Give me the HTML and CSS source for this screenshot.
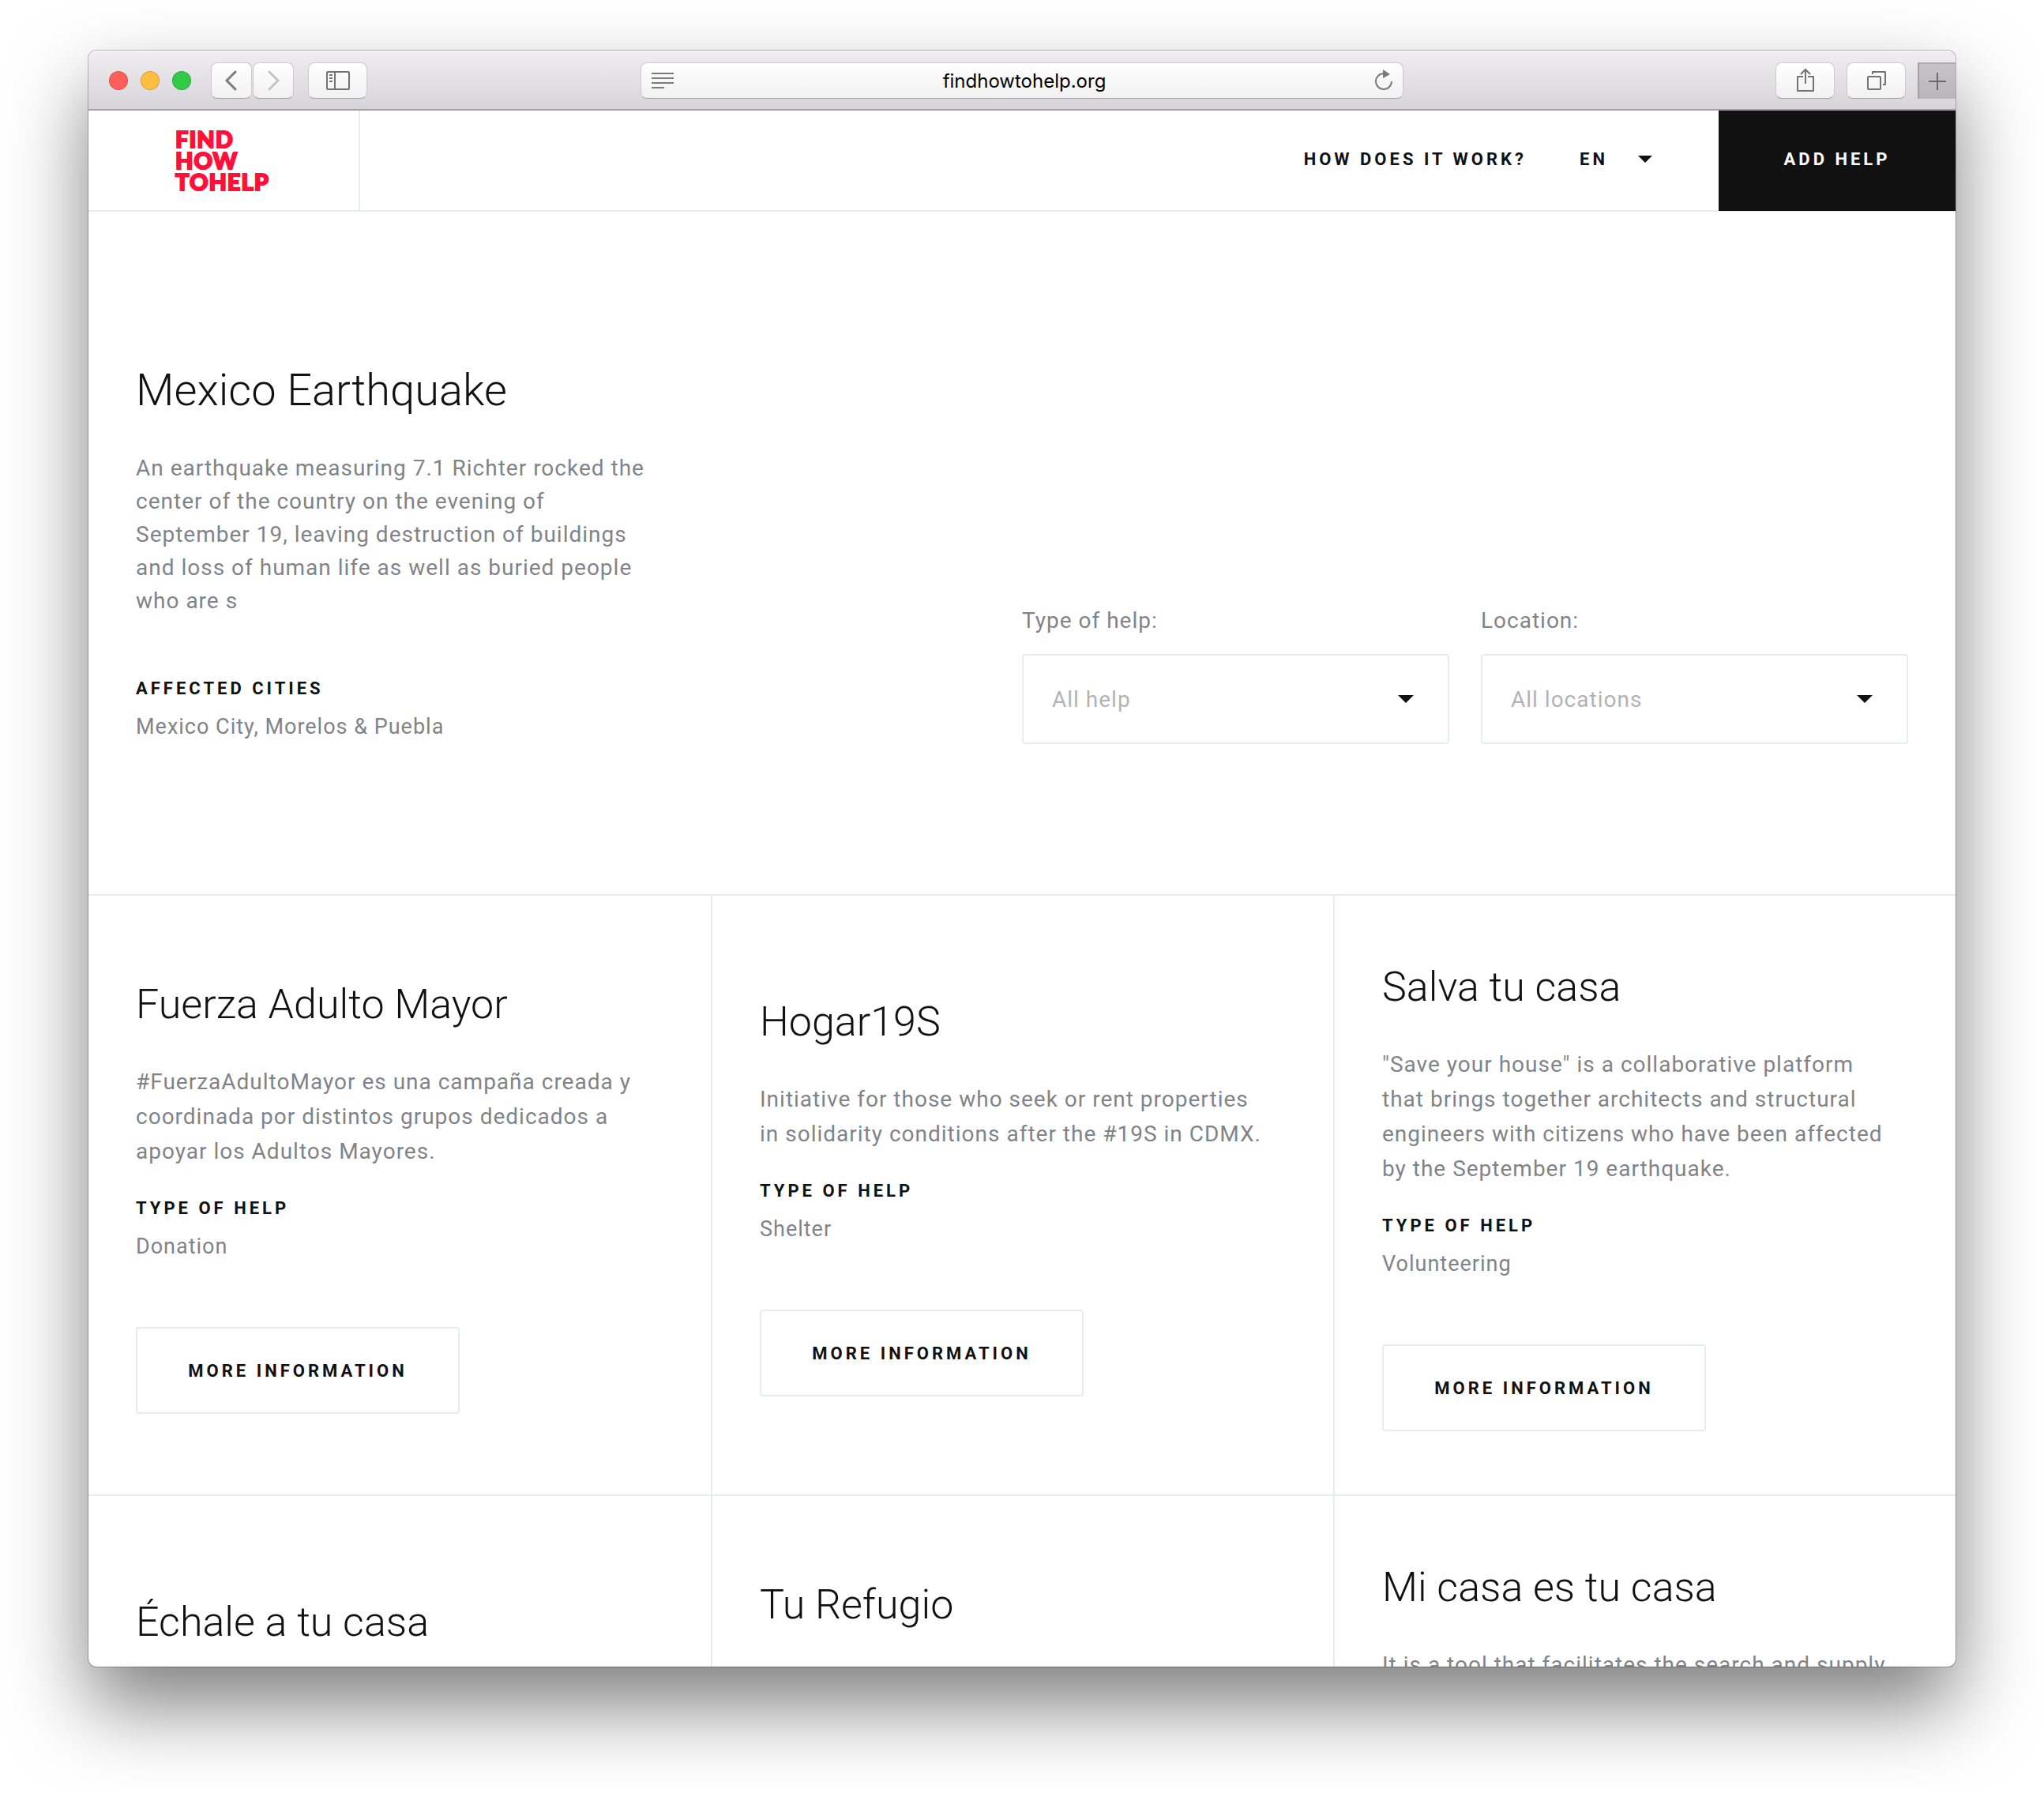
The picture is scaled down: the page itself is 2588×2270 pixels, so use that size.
FILE: index.html
```
<!DOCTYPE html>
<html lang="en">

<head>
    <meta charset="UTF-8" />
    <meta name="viewport" content="width=device-width, initial-scale=1.0" />
    <title>Find How To Help</title>
    <link rel="stylesheet" href="styles.css">
</head>

<body>
    <div class="window">
        <div class="toolbar">
            <div class="toolbar-left">
                <div class="lights">
                    <span class="light red"></span>
                    <span class="light yellow"></span>
                    <span class="light green"></span>
                </div>
                <div class="history">
                    <button class="tool-btn nav-btn" aria-label="Back">
                        <svg width="16" height="26" viewBox="0 0 16 26"><path d="M13 2 2 13l11 11" fill="none" stroke="#7b7b7b" stroke-width="3" stroke-linecap="round" /></svg>
                    </button>
                    <button class="tool-btn nav-btn" aria-label="Forward">
                        <svg width="16" height="26" viewBox="0 0 16 26"><path d="M3 2l11 11L3 24" fill="none" stroke="#c4c4c4" stroke-width="3" stroke-linecap="round" /></svg>
                    </button>
                </div>
                <button class="tool-btn" aria-label="Sidebar">
                    <svg width="30" height="24" viewBox="0 0 30 24" fill="none" stroke="#737373" stroke-width="2">
                        <rect x="1" y="1" width="28" height="22" rx="1" />
                        <path d="M11 1v22M4 5h4M4 9h4M4 13h4" />
                    </svg>
                </button>
            </div>
            <div class="address">
                <svg width="28" height="20" viewBox="0 0 28 20"><path d="M0 1h28M0 7h28M0 13h28M0 19h16" stroke="#7b7b7b" stroke-width="2" /></svg>
                <span class="url">findhowtohelp.org</span>
                <button class="reload" aria-label="Reload">
                    <svg width="22" height="28" viewBox="0 0 22 28">
                        <path d="M11 5a10 10 0 1 0 10 10" fill="none" stroke="#7b7b7b" stroke-width="2" />
                        <path d="M10 0v11l9-5z" fill="#7b7b7b" />
                    </svg>
                </button>
            </div>
            <div class="toolbar-right">
                <button class="tool-btn" aria-label="Share">
                    <svg width="22" height="32" viewBox="0 0 22 32" fill="none" stroke="#737373" stroke-width="2" stroke-linejoin="round">
                        <path d="M8 11H1v18h20V11h-7M11 20V1M5 8l6-6 6 6" />
                    </svg>
                </button>
                <button class="tool-btn" aria-label="Tabs">
                    <svg width="24" height="24" viewBox="0 0 24 24" fill="none" stroke="#737373" stroke-width="2" stroke-linejoin="round">
                        <rect x="1" y="7" width="16" height="16" rx="1" />
                        <path d="M7 4V1h16v16h-3" />
                    </svg>
                </button>
                <button class="new-tab" aria-label="New tab">
                    <svg width="22" height="22" viewBox="0 0 22 22"><path d="M11 0v22M0 11h22" stroke="#6c6a6e" stroke-width="2" /></svg>
                </button>
            </div>
        </div>

        <div class="page">
            <header class="header">
                <a class="logo" href="#">FIND<br>HOW<br>TOHELP</a>
                <nav class="nav">
                    <a class="nav-link" href="#">How does it work?</a>
                    <div class="lang">
                        <select class="lang-select" aria-label="Language">
                            <option>EN</option>
                            <option>ES</option>
                        </select>
                        <svg class="caret" width="18" height="9" viewBox="0 0 20 10"><path d="M0 0h20L10 10z" fill="#111" /></svg>
                    </div>
                    <a class="add-help" href="#">Add help</a>
                </nav>
            </header>

            <section class="hero">
                <div class="intro">
                    <h1>Mexico Earthquake</h1>
                    <p class="lead">An earthquake measuring 7.1 Richter rocked the center of the country on the evening of September 19, leaving destruction of buildings and loss of human life as well as buried people who are s</p>
                    <h3>Affected cities</h3>
                    <p class="value">Mexico City, Morelos &amp; Puebla</p>
                </div>
                <form class="filters">
                    <div class="field">
                        <label for="help">Type of help:</label>
                        <div class="select-box">
                            <select id="help">
                                <option>All help</option>
                            </select>
                            <svg class="caret" width="20" height="10" viewBox="0 0 20 10"><path d="M0 0h20L10 10z" fill="#111" /></svg>
                        </div>
                    </div>
                    <div class="field">
                        <label for="location">Location:</label>
                        <div class="select-box">
                            <select id="location">
                                <option>All locations</option>
                            </select>
                            <svg class="caret" width="20" height="10" viewBox="0 0 20 10"><path d="M0 0h20L10 10z" fill="#111" /></svg>
                        </div>
                    </div>
                </form>
            </section>

            <main class="cards">
                <article class="card">
                    <h2>Fuerza Adulto Mayor</h2>
                    <p class="text">#FuerzaAdultoMayor es una campaña creada y coordinada por distintos grupos dedicados a apoyar los Adultos Mayores.</p>
                    <h3>Type of help</h3>
                    <p class="value">Donation</p>
                    <a class="more" href="#">More information</a>
                </article>
                <article class="card">
                    <h2>Hogar19S</h2>
                    <p class="text">Initiative for those who seek or rent properties in solidarity conditions after the #19S in CDMX.</p>
                    <h3>Type of help</h3>
                    <p class="value">Shelter</p>
                    <a class="more" href="#">More information</a>
                </article>
                <article class="card">
                    <h2>Salva tu casa</h2>
                    <p class="text">"Save your house" is a collaborative platform that brings together architects and structural engineers with citizens who have been affected by the September 19 earthquake.</p>
                    <h3>Type of help</h3>
                    <p class="value">Volunteering</p>
                    <a class="more" href="#">More information</a>
                </article>
                <article class="card peek peek-low">
                    <h2>Échale a tu casa</h2>
                </article>
                <article class="card peek peek-mid">
                    <h2>Tu Refugio</h2>
                </article>
                <article class="card peek">
                    <h2>Mi casa es tu casa</h2>
                    <p class="text">It is a tool that facilitates the search and supply</p>
                </article>
            </main>
        </div>
    </div>
</body>

</html>
```
FILE: styles.css
```
* {
    margin: 0;
    padding: 0;
    box-sizing: border-box;
}

:root {
    --line: #e8ecef;
    --ink: #111;
    --gray: #808489;
}

body {
    background: #fff;
    color: var(--ink);
    font-family: Roboto, sans-serif;
    padding: 64px 112px 160px;
}

a {
    color: inherit;
    text-decoration: none;
}

button,
select {
    font: inherit;
    color: inherit;
    border: none;
    background: none;
    cursor: pointer;
}

select {
    appearance: none;
}

svg {
    display: block;
}

/* browser window */

.window {
    display: flex;
    flex-direction: column;
    height: calc(100vh - 224px);
    border-radius: 10px;
    overflow: hidden;
    background: #fff;
    box-shadow: 0 0 0 1px rgba(0, 0, 0, 0.25), 0 50px 100px rgba(0, 0, 0, 0.5);
}

.toolbar {
    display: grid;
    grid-template-columns: 1fr minmax(0, 966px) 1fr;
    align-items: center;
    flex: none;
    height: 76px;
    background: linear-gradient(#efedf0, #d6d4d8);
    border-top: 2px solid #f6f5f7;
    border-bottom: 2px solid #a3a0a6;
}

.toolbar-left {
    display: flex;
    align-items: center;
    padding-left: 26px;
}

.lights {
    display: flex;
    gap: 16px;
    margin-right: 25px;
}

.light {
    width: 24px;
    height: 24px;
    border-radius: 50%;
    border: 1px solid rgba(0, 0, 0, 0.15);
}

.red {
    background: #fd605c;
}

.yellow {
    background: #fdbe41;
}

.green {
    background: #33c949;
}

.history {
    display: flex;
    gap: 1px;
    margin-right: 18px;
}

.tool-btn {
    display: flex;
    align-items: center;
    justify-content: center;
    width: 75px;
    height: 46px;
    border-radius: 8px;
    background: linear-gradient(#fff, #f1f1f1);
    border: 1px solid #cccacd;
    border-bottom-color: #a5a3a7;
}

.nav-btn {
    width: 52px;
}

.address {
    display: flex;
    align-items: center;
    justify-content: space-between;
    height: 46px;
    padding: 0 13px;
    border-radius: 8px;
    background: linear-gradient(#fff, #f1f1f1);
    border: 1px solid #cccacd;
    border-bottom-color: #a5a3a7;
}

.url {
    font-family: Inter, sans-serif;
    font-size: 24px;
    color: #000;
}

.toolbar-right {
    display: flex;
    align-items: center;
    justify-content: flex-end;
    gap: 15px;
}

.new-tab {
    display: flex;
    align-items: center;
    justify-content: center;
    align-self: flex-end;
    width: 48px;
    height: 46px;
    background: linear-gradient(#c6c4c8, #b9b6ba);
    border-top: 2px solid #aeabb0;
    border-left: 2px solid #a3a0a6;
}

/* site */

.page {
    flex: 1;
    min-height: 0;
    overflow: hidden;
}

.header {
    display: flex;
    justify-content: space-between;
    height: 128px;
    border-bottom: 2px solid var(--line);
}

.logo {
    width: 344px;
    padding: 22px 0 0 110px;
    border-right: 2px solid var(--line);
    font-family: Lato, sans-serif;
    font-weight: 900;
    font-size: 29px;
    line-height: 27px;
    letter-spacing: 1px;
    -webkit-text-stroke: 2px #ff1038;
    color: #ff1038;
}

.nav {
    display: flex;
    align-items: center;
}

.nav,
.more,
h3 {
    font-size: 22px;
    font-weight: 700;
    letter-spacing: 4px;
    text-transform: uppercase;
}

.nav-link,
.lang {
    margin-bottom: 3px;
}

.nav-link {
    margin-right: 67px;
}

.lang {
    position: relative;
    width: 92px;
    margin-right: 84px;
}

.lang-select {
    width: 100%;
    letter-spacing: 4px;
}

.caret {
    position: absolute;
    top: 50%;
    right: 0;
    margin-top: -5px;
    pointer-events: none;
}

.add-help {
    display: flex;
    align-items: center;
    justify-content: center;
    align-self: stretch;
    width: 300px;
    margin-bottom: -1px;
    padding-bottom: 4px;
    background: #111;
    color: #fff;
}

.hero {
    display: flex;
    justify-content: space-between;
    align-items: flex-end;
    padding: 190px 60px;
}

h1,
h2 {
    font-weight: 300;
    line-height: 72px;
}

h1 {
    font-size: 56px;
    margin-bottom: 42px;
}

h2 {
    font-size: 52px;
    margin-bottom: 40px;
}

h3 {
    line-height: 44px;
    margin-bottom: 4px;
}

.lead,
.text,
.field {
    font-size: 28px;
    letter-spacing: 1px;
    color: var(--gray);
}

.lead {
    max-width: 656px;
    line-height: 42px;
    margin-bottom: 68px;
}

.text {
    max-width: 644px;
    line-height: 44px;
    margin-bottom: 28px;
}

.value {
    font-size: 27px;
    line-height: 44px;
    letter-spacing: 1px;
    color: var(--gray);
}

.filters {
    display: flex;
    gap: 40px;
    width: 50%;
}

.field {
    flex: 1;
}

.field label {
    display: block;
    line-height: 44px;
    margin-bottom: 20px;
}

.select-box {
    position: relative;
}

.select-box select {
    width: 100%;
    height: 114px;
    padding: 0 36px;
    border: 2px solid var(--line);
    border-radius: 4px;
    letter-spacing: 1px;
    color: #b2b3b5;
}

.select-box .caret {
    right: 45px;
}

.cards {
    display: grid;
    grid-template-columns: repeat(3, 1fr);
}

.card {
    display: flex;
    flex-direction: column;
    align-items: flex-start;
    justify-content: center;
    min-height: 760px;
    padding: 40px 60px;
    border-top: 2px solid var(--line);
    border-left: 2px solid var(--line);
}

.card:nth-child(3n + 1) {
    border-left: none;
}

.more {
    display: flex;
    align-items: center;
    justify-content: center;
    width: 410px;
    height: 110px;
    margin-top: 80px;
    border: 2px solid var(--line);
    border-radius: 4px;
}

.peek {
    justify-content: flex-start;
    padding-top: 80px;
}

.peek-mid {
    padding-top: 102px;
}

.peek-low {
    padding-top: 124px;
}
```
